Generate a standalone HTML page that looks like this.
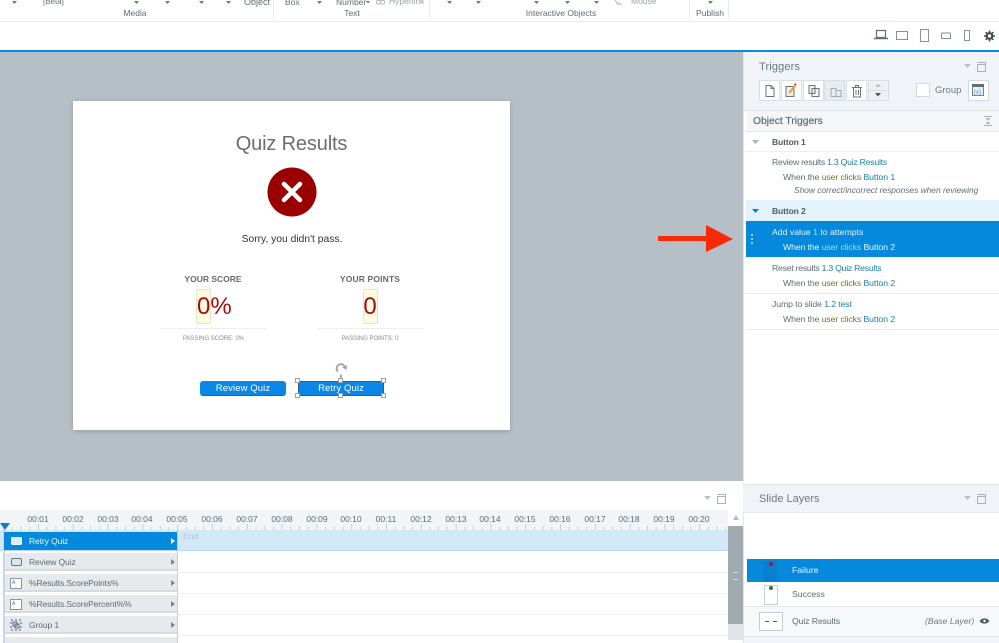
<!DOCTYPE html>
<html><head><meta charset="utf-8"><style>
html,body{margin:0;padding:0;width:999px;height:643px;overflow:hidden;background:#fff}
body{position:relative;font-family:"Liberation Sans",sans-serif;color:#5f6b72;filter:blur(.35px)}
.a,.t{position:absolute}
.t{white-space:nowrap;line-height:14px;font-size:8.7px}
.c{transform:translateX(-50%)}
.b{color:#1a7fa0}.g{color:#6b7a1e}
.sel .b,.sel .g{color:#8fe3ee}
.n{letter-spacing:-.25px}.m{letter-spacing:-.1px}
.r{font-size:8.5px;letter-spacing:-.1px}
.row{position:absolute;left:5px;width:172px;height:16px;background:#e6eaed;border-bottom:2px solid #d5dbdf}
.btn{position:absolute;top:80px;width:19px;height:19px;background:#fff;border:1px solid #d9dfe3}
.h{position:absolute;width:3px;height:3px;background:#fff;border:1.500px solid #a0a0a0}
.ru{position:absolute;top:513px;font-size:8.5px;line-height:12px;color:#5f6b72;transform:translateX(-50%)}
</style></head><body>

<!-- ribbon -->
<div class="a" style="left:0;top:21px;width:999px;height:1px;background:#e6eaec"></div>
<div class="a" style="left:273px;top:0;width:1px;height:19px;background:#e8ecee"></div>
<div class="a" style="left:429px;top:0;width:1px;height:19px;background:#e8ecee"></div>
<div class="a" style="left:689px;top:0;width:1px;height:19px;background:#e8ecee"></div>
<div class="a" style="left:728px;top:0;width:1px;height:19px;background:#e8ecee"></div>
<span class="t" style="left:43px;top:-5px;font-size:8px">[Beta]</span>
<span class="t" style="left:244px;top:-5px;font-size:9px">Object</span>
<span class="t" style="left:285px;top:-5px;font-size:8.5px">Box</span>
<span class="t" style="left:336px;top:-5px;font-size:8.5px">Number</span>
<span class="t" style="left:389px;top:-6px;font-size:8.5px;color:#9aa3a8">Hyperlink</span>
<span class="t" style="left:631px;top:-6px;font-size:8.5px;color:#9aa3a8">Mouse</span>
<span class="t c" style="left:135px;top:6px;font-size:8.5px">Media</span>
<span class="t c" style="left:352px;top:6px;font-size:8.5px">Text</span>
<span class="t c" style="left:561px;top:6px;font-size:8.5px">Interactive Objects</span>
<span class="t c" style="left:710px;top:6px;font-size:8.5px">Publish</span>
<svg class="a" style="left:0;top:0" width="720" height="6" fill="#777">
<path d="M12 1h5l-2.500 3zM134 1h5l-2.500 3zM165 1h5l-2.500 3zM199 1h5l-2.500 3zM226 1h5l-2.500 3zM317 1h5l-2.500 3zM366 1h4l-2 2.500zM447 1h5l-2.500 3zM476 1h5l-2.500 3zM534 1h5l-2.500 3zM565 1h5l-2.500 3zM594 1h5l-2.500 3zM708 1h5l-2.500 3z"/></svg>
<svg class="a" style="left:375px;top:0" width="250" height="6" fill="none" stroke="#b0b8bd"><rect x="1.500" y="0.500" width="4" height="3.500" rx="1.500"/><rect x="5.500" y="0.500" width="4" height="3.500" rx="1.500"/><path d="M240 0l3 4.500 1.500-1.500 2 2" /></svg>

<!-- device icons -->
<svg class="a" style="left:870px;top:28px" width="125" height="16" fill="none" stroke="#62717a">
<path d="M6.500 2.500h9v7h-9z" stroke-width="1.200"/><path d="M4 10.500h14" stroke-width="1.500"/>
<rect x="26.500" y="3.500" width="11" height="8" stroke="#85929a"/>
<rect x="50.500" y="1.500" width="8" height="12" stroke="#85929a"/>
<rect x="71.500" y="5" width="9" height="5.500" stroke="#85929a"/>
<rect x="94.500" y="2.500" width="5" height="10" stroke="#85929a"/>
<circle cx="119.500" cy="8" r="2.800" stroke="#3d4c55" stroke-width="2.200"/>
<path d="M119.500 2.500v11M114 8h11M115.600 4.100l7.800 7.800M115.600 11.900l7.800-7.800" stroke="#3d4c55" stroke-width="1.500" stroke-dasharray="2 7"/>
</svg>

<div class="a" style="left:0;top:50px;width:999px;height:2px;background:#0a8ae0"></div>

<!-- canvas -->
<div class="a" style="left:0;top:52px;width:743px;height:429px;background:#b5bfc5"></div>
<div class="a" style="left:73px;top:101px;width:437px;height:329px;background:#fff;box-shadow:0 1px 4px rgba(80,90,100,.35)"></div>
<span class="t c" style="left:291.500px;top:132px;font-size:20px;line-height:24px;color:#6d6d6d;letter-spacing:-.15px">Quiz Results</span>
<svg class="a" style="left:267px;top:167px" width="50" height="50"><circle cx="25" cy="25" r="24.500" fill="#990000"/><path d="M17 17l16 16M33 17L17 33" stroke="#fff" stroke-width="4.500" stroke-linecap="round"/></svg>
<span class="t c" style="left:292px;top:233px;font-size:10.300px;color:#333">Sorry, you didn't pass.</span>
<span class="t c" style="left:213px;top:272px;font-size:8.500px;font-weight:bold;color:#6a6a6a;letter-spacing:0">YOUR SCORE</span>
<span class="t c" style="left:370px;top:272px;font-size:8.500px;font-weight:bold;color:#6a6a6a;letter-spacing:.15px">YOUR POINTS</span>
<div class="a" style="left:196px;top:289px;width:13px;height:33px;background:#fdfbe0;border:1px solid #e6e4c4;border-radius:2px"></div>
<div class="a" style="left:363px;top:289px;width:13px;height:33px;background:#fdfbe0;border:1px solid #e6e4c4;border-radius:2px"></div>
<span class="t" style="left:197px;top:293px;font-size:24px;line-height:28px;color:#a00f0f">0%</span>
<span class="t c" style="left:370px;top:293px;font-size:24px;line-height:28px;color:#a00f0f">0</span>
<div class="a" style="left:161px;top:328px;width:106px;height:1px;background:#eee"></div>
<div class="a" style="left:317px;top:328px;width:106px;height:1px;background:#eee"></div>
<span class="t c" style="left:213.500px;top:332px;font-size:6px;color:#888">PASSING SCORE: 0%</span>
<span class="t c" style="left:370px;top:332px;font-size:6px;color:#888">PASSING POINTS: 0</span>
<div class="a" style="left:200px;top:381px;width:86px;height:15px;background:#0a86e6;border-radius:3px;border:0 solid #0a6ab8;border-bottom-width:1px;box-sizing:border-box"></div>
<span class="t c" style="left:243px;top:382px;font-size:9.500px;color:#fff;letter-spacing:.1px">Review Quiz</span>
<div class="a" style="left:298px;top:381px;width:86px;height:15px;background:#0a86e6;border:1px solid #2a5f8a;box-sizing:border-box"></div>
<span class="t c" style="left:341px;top:382px;font-size:9.500px;color:#fff;letter-spacing:.1px">Retry Quiz</span>
<svg class="a" style="left:330px;top:360px" width="22" height="22" fill="none" stroke="#a0a0a0" stroke-width="1.800"><path d="M11 20v-5.500M8 11.500a4.200 4.200 0 1 1 7-3.500"/><path d="M13 7l3 2 .5-3.500" stroke-width="1.200"/></svg>
<div class="h" style="left:295px;top:378px"></div><div class="h" style="left:338px;top:378px"></div><div class="h" style="left:381px;top:378px"></div>
<div class="h" style="left:295px;top:393px"></div><div class="h" style="left:338px;top:393px"></div><div class="h" style="left:381px;top:393px"></div>

<!-- arrow -->
<svg class="a" style="left:650px;top:215px" width="90" height="45"><path d="M8 21h48V10l27 14-27 13V26H8z" fill="#f82a08"/></svg>

<!-- right panel -->
<div class="a" style="left:743px;top:52px;width:256px;height:431px;background:#fff;border-left:1px solid #e1e6e9"></div>
<div class="a" style="left:744px;top:52px;width:255px;height:58px;background:#f0f4f8"></div>
<span class="t" style="left:759px;top:60px;font-size:11.300px;color:#6a7a84">Triggers</span>
<svg class="a" style="left:962px;top:60px" width="26" height="13" fill="none" stroke="#a8b3b9"><path d="M2 4h7l-3.500 4z" fill="#b8c1c6" stroke="none"/><rect x="15.500" y="4.500" width="8" height="7"/><path d="M15.500 2.500h8v2"/></svg>
<div class="btn" style="left:759px"></div><div class="btn" style="left:781px"></div><div class="btn" style="left:803px"></div><div class="btn" style="left:824px;background:#e9ecee"></div><div class="btn" style="left:846px"></div><div class="btn" style="left:868px;background:#eef1f3"></div>
<svg class="a" style="left:759px;top:80px" width="130" height="21" fill="none" stroke="#66757e">
<path d="M7 5.500h5l3 3v8H7zM12 5.500v3h3"/>
<path d="M28 6.500h7v10h-8V6.500z" fill="#eee"/><path d="M30 13l6-7" stroke="#e8a020" stroke-width="2"/><path d="M35.500 5l1.500-1" stroke="#e03030" stroke-width="2"/>
<path d="M50 5.500h6v8h-6zM53 8.500h7v8h-7z" fill="#f4f4f4"/>
<path d="M72 8.500h5v8h-5zM77 10.500h5v6h-5z" stroke="#a0acb3"/>
<path d="M93 7.500h10M94.500 8v9h7V8M96.500 7V5.500h3V7M97 10v5M99.500 10v5"/>
<path d="M116 7h6l-3-3.500z" fill="#b8c1c6" stroke="none"/><path d="M116 13h6l-3 3.500z" fill="#555" stroke="none"/><path d="M109 10.500h19" stroke="#d9dfe3"/>
</svg>
<div class="a" style="left:916px;top:83px;width:12px;height:12px;background:#fff;border:1px solid #d3d9dd"></div>
<span class="t" style="left:935px;top:84px;font-size:9.500px;color:#6a7a84">Group</span>
<div class="a" style="left:968px;top:80px;width:19px;height:19px;background:#fff;border:1px solid #d3d9dd"></div>
<svg class="a" style="left:972px;top:84px" width="13" height="13"><rect x=".5" y=".5" width="11" height="11" fill="#e8f0f6" stroke="#6d8494"/><rect x="0" y="0" width="12" height="3" fill="#5f6f78"/><text x="2" y="10" font-size="6" fill="#4a8ac0" font-family="Liberation Sans">(x)</text></svg>

<div class="a" style="left:744px;top:110px;width:255px;height:1px;background:#e4e8eb"></div>
<div class="a" style="left:746px;top:111px;width:253px;height:20px;background:#f4f6f8;border-bottom:1px solid #e3e7ea"></div>
<span class="t" style="left:753px;top:115px;font-size:10.300px;color:#5f6f78;-webkit-text-stroke:.2px #5f6f78">Object Triggers</span>
<svg class="a" style="left:983px;top:115px" width="10" height="12" fill="#a6b0b6"><path d="M1 1h8v1H1zM1 10h8v1H1zM2.500 3h5L5 5.500zM2.500 9h5L5 6.500z"/></svg>

<svg class="a" style="left:752px;top:139px" width="8" height="6"><path d="M0 1h7L3.500 5z" fill="#a8b2b8"/></svg>
<span class="t m" style="left:772px;top:135px;font-size:8.500px;font-weight:bold;color:#4f5c64">Button 1</span>
<div class="a" style="left:746px;top:151px;width:253px;height:1px;background:#eceff1"></div>
<span class="t n" style="left:772px;top:155px">Review results <span class="b">1.3 Quiz Results</span></span>
<span class="t m" style="left:783px;top:170px">When the <span class="g">user clicks</span> <span class="b">Button 1</span></span>
<span class="t" style="left:794px;top:183px;font-size:8.400px;font-style:italic">Show correct/incorrect responses when reviewing</span>

<div class="a" style="left:746px;top:200px;width:253px;height:21px;background:#e3f3fb"></div>
<svg class="a" style="left:752px;top:208px" width="8" height="6"><path d="M0 1h7L3.500 5z" fill="#0a7fd0"/></svg>
<span class="t m" style="left:772px;top:204px;font-size:8.500px;font-weight:bold;color:#4f5c64">Button 2</span>

<div class="a sel" style="left:746px;top:221px;width:253px;height:36px;background:#0589dc"></div>
<svg class="a" style="left:750px;top:233px" width="4" height="13" fill="#cfe8f8"><circle cx="2" cy="2" r="1"/><circle cx="2" cy="6" r="1"/><circle cx="2" cy="10" r="1"/></svg>
<span class="t sel" style="left:772px;top:225px;color:#e2f2fc">Add value <span class="b">1</span> to attempts</span>
<span class="t sel m" style="left:783px;top:240px;color:#eaf6fd">When the <span class="g">user clicks</span> <span style="color:#eaf6fd">Button 2</span></span>

<span class="t n" style="left:772px;top:261px">Reset results <span class="b">1.3 Quiz Results</span></span>
<span class="t m" style="left:783px;top:276px">When the <span class="g">user clicks</span> <span class="b">Button 2</span></span>
<div class="a" style="left:746px;top:293px;width:253px;height:1px;background:#e6e9eb"></div>
<span class="t m" style="left:772px;top:297px">Jump to slide <span class="b">1.2 test</span></span>
<span class="t m" style="left:783px;top:312px">When the <span class="g">user clicks</span> <span class="b">Button 2</span></span>
<div class="a" style="left:746px;top:329px;width:253px;height:1px;background:#e6e9eb"></div>

<!-- slide layers -->
<div class="a" style="left:743px;top:484px;width:256px;height:29px;background:#f0f4f8;border-top:1px solid #e1e6e9;border-bottom:1px solid #e4e8eb;box-sizing:border-box"></div>
<span class="t" style="left:759px;top:492px;font-size:11px;color:#6a7a84">Slide Layers</span>
<svg class="a" style="left:962px;top:492px" width="26" height="13" fill="none" stroke="#a8b3b9"><path d="M2 4h7l-3.500 4z" fill="#b8c1c6" stroke="none"/><rect x="15.500" y="4.500" width="8" height="7"/><path d="M15.500 2.500h8v2"/></svg>
<div class="a" style="left:743px;top:513px;width:1px;height:130px;background:#e1e6e9"></div>
<div class="a" style="left:747px;top:559px;width:252px;height:23px;background:#0589dc"></div>
<div class="a" style="left:763px;top:561px;width:14px;height:21px;background:#0a7fd0"></div>
<div class="a" style="left:769px;top:562px;width:4px;height:4px;border-radius:50%;background:#c01030"></div>
<span class="t" style="left:792px;top:563px;color:#e6f4fc">Failure</span>
<div class="a" style="left:764px;top:585px;width:12px;height:18px;background:#fff;border:1px solid #c5d0d6"></div>
<div class="a" style="left:769px;top:586px;width:4px;height:4px;border-radius:50%;background:#2a7a30"></div>
<span class="t" style="left:792px;top:587px">Success</span>
<div class="a" style="left:744px;top:606px;width:255px;height:30px;background:#f7f8f9;border-top:1px solid #e4e8eb;box-sizing:border-box"></div>
<div class="a" style="left:759px;top:612px;width:22px;height:17px;background:#fff;border:1px solid #c5cdd2"></div>
<div class="a" style="left:765px;top:621px;width:4px;height:1px;background:#555"></div><div class="a" style="left:773px;top:621px;width:4px;height:1px;background:#555"></div>
<span class="t m" style="left:792px;top:614px">Quiz Results</span>
<span class="t" style="left:925px;top:614px;font-size:8.600px;font-style:italic;color:#6a7a84">(Base Layer)</span>
<svg class="a" style="left:979px;top:617px" width="11" height="8"><path d="M.5 4C3 .5 8 .5 10.500 4 8 7.500 3 7.500 .5 4z" fill="#4d5c64"/><circle cx="5.500" cy="4" r="1.200" fill="#fff"/></svg>
<div class="a" style="left:744px;top:636px;width:255px;height:7px;background:#f0f4f8;border-top:1px solid #e4e8eb;box-sizing:border-box"></div>

<!-- timeline -->
<svg class="a" style="left:702px;top:492px" width="26" height="13" fill="none" stroke="#a8b3b9"><path d="M2 4h7l-3.500 4z" fill="#b8c1c6" stroke="none"/><rect x="15.500" y="4.500" width="8" height="7"/><path d="M15.500 2.500h8v2"/></svg>
<div class="a" style="left:0;top:510px;width:728px;height:20px;background:#f1f5f8"></div>
<svg class="a" style="left:0;top:510px" width="728" height="20"><defs><pattern id="p" width="34.800" height="20" patternUnits="userSpaceOnUse" x="3.200"><path d="M.5 14v6M9.200 17v3M17.900 16v4M26.600 17v3" stroke="#c5ced3" fill="none"/></pattern></defs><rect width="728" height="20" fill="url(#p)"/></svg>
<span class="ru" style="left:38px">00:01</span><span class="ru" style="left:73px">00:02</span><span class="ru" style="left:108px">00:03</span><span class="ru" style="left:142px">00:04</span><span class="ru" style="left:177px">00:05</span><span class="ru" style="left:212px">00:06</span><span class="ru" style="left:247px">00:07</span><span class="ru" style="left:282px">00:08</span><span class="ru" style="left:317px">00:09</span><span class="ru" style="left:351px">00:10</span><span class="ru" style="left:386px">00:11</span><span class="ru" style="left:421px">00:12</span><span class="ru" style="left:456px">00:13</span><span class="ru" style="left:490px">00:14</span><span class="ru" style="left:525px">00:15</span><span class="ru" style="left:560px">00:16</span><span class="ru" style="left:595px">00:17</span><span class="ru" style="left:629px">00:18</span><span class="ru" style="left:664px">00:19</span><span class="ru" style="left:699px">00:20</span>
<div class="a" style="left:0;top:530px;width:728px;height:21px;background:#d3e8f7;border-bottom:1px solid #bcd9ec;box-sizing:border-box"></div>
<span class="t" style="left:183px;top:529px;font-size:8.500px;color:#b8c8d2">End</span>
<div class="a" style="left:0;top:572px;width:728px;height:1px;background:#eee"></div>
<div class="a" style="left:0;top:593px;width:728px;height:1px;background:#eee"></div>
<div class="a" style="left:0;top:614px;width:728px;height:1px;background:#eee"></div>
<div class="a" style="left:0;top:635px;width:728px;height:1px;background:#eee"></div>
<div class="a" style="left:4px;top:551px;width:174px;height:92px;background:#fff"></div>
<div class="a" style="left:3px;top:530px;width:2px;height:113px;background:#c4d9e7"></div>
<div class="a" style="left:177px;top:530px;width:1px;height:113px;background:#bcd0dc"></div>
<svg class="a" style="left:0;top:523px" width="11" height="8"><path d="M0 0h10L5 7z" fill="#0a7fd0"/></svg>

<div class="a" style="left:4px;top:532px;width:173px;height:18px;background:#0589dc"></div>
<div class="a" style="left:11px;top:537px;width:9px;height:6px;border:1px solid #fff;border-radius:2px;background:#dcecf8"></div>
<span class="t r" style="left:29px;top:534px;color:#e6f4fc">Retry Quiz</span>
<div class="row" style="top:553px"></div><div class="row" style="top:574px"></div><div class="row" style="top:595px"></div><div class="row" style="top:616px"></div><div class="row" style="top:637px"></div>
<div class="a" style="left:11px;top:558px;width:9px;height:6px;border:1px solid #5d7a90;border-radius:2px;background:#dce6ee"></div>
<span class="t r" style="left:29px;top:555px">Review Quiz</span>
<div class="a" style="left:10px;top:578px;width:10px;height:9px;border:1px solid #8a969d;background:#fff"></div>
<span class="t" style="left:12px;top:576px;font-size:5px;color:#3a7ab0">A</span>
<span class="t r" style="left:29px;top:576px">%Results.ScorePoints%</span>
<div class="a" style="left:10px;top:599px;width:10px;height:9px;border:1px solid #8a969d;background:#fff"></div>
<span class="t" style="left:12px;top:597px;font-size:5px;color:#3a7ab0">A</span>
<span class="t r" style="left:29px;top:597px">%Results.ScorePercent%%</span>
<svg class="a" style="left:10px;top:619px" width="12" height="12" fill="none"><path d="M1 1h10v10H1z" stroke="#2a6a9a" stroke-dasharray="2 2"/><path d="M3 3h4v4H3zM5 5h4v4H5z" stroke="#667"/></svg>
<span class="t r" style="left:29px;top:618px">Group 1</span>
<svg class="a" style="left:170px;top:537px" width="6" height="100"><path d="M1 1l4 3-4 3z" fill="#fff"/><path d="M1 22l4 3-4 3zM1 43l4 3-4 3zM1 64l4 3-4 3zM1 85l4 3-4 3z" fill="#7a858c"/></svg>

<!-- scrollbar -->
<div class="a" style="left:728px;top:510px;width:15px;height:133px;background:#fff"></div>
<svg class="a" style="left:733px;top:515px" width="7" height="6"><path d="M0 5h6L3 0z" fill="#b5bec4"/></svg>
<div class="a" style="left:728px;top:526px;width:15px;height:98px;background:#9fabb0"></div>
<div class="a" style="left:733px;top:572px;width:5px;height:6px;border-top:1px solid #d5dadd;border-bottom:1px solid #d5dadd"></div>
<div class="a" style="left:728px;top:624px;width:15px;height:16px;background:#dfe5e8"></div>
</body></html>
